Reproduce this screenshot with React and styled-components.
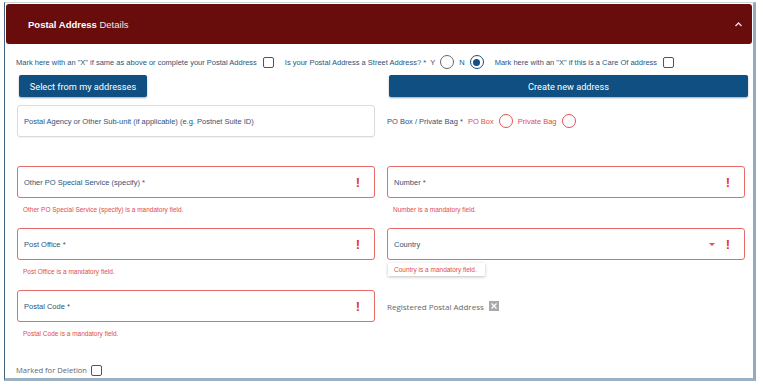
import React from "react";
import styled, { createGlobalStyle } from "styled-components";

const Global = createGlobalStyle`
  html, body { margin: 0; padding: 0; background: #fff; }
  body { font-family: "Liberation Sans", Arial, sans-serif; }
`;

const Frame = styled.div`
  margin: 2px 0 0 4px;
  width: 748px;
  height: 375px;
  border-top: 1px solid #c9d6df;
  border-left: 1px solid #3f6482;
  border-right: 3px solid #93aabb;
  border-bottom: 3px solid #9db2c2;
  box-sizing: content-box;
  display: flex;
  flex-direction: column;
`;

const Header = styled.div`
  margin: 1px 1px 0 1px;
  height: 40px;
  background: #680c0c;
  border-radius: 3px;
  display: flex;
  align-items: center;
  justify-content: space-between;
  padding: 0 9px 0 22px;
  color: #fff;
  font-size: 9.5px;
`;

const Title = styled.div`
  b { font-weight: 700; }
  span { font-weight: 400; color: #f3e6e6; }
`;

const Body = styled.div`
  padding: 0 7px 0 12px;
  display: flex;
  flex-direction: column;
`;

const CheckLine = styled.div`
  display: flex;
  align-items: center;
  height: 16px;
  margin-top: 10px;
  margin-left: -1px;
  font-size: 7.5px;
  color: #2d5479;
  white-space: nowrap;
`;

const Inline = styled.span`
  display: inline-flex;
  align-items: center;
  gap: ${(p) => p.$gap || 4}px;
  margin-right: ${(p) => p.$mr || 0}px;
`;

const Box = styled.span`
  display: inline-block;
  width: 9px;
  height: 9px;
  border: 1px solid #555;
  border-radius: 2px;
  margin-left: ${(p) => p.$ml || 0}px;
  flex: none;
`;

const GreyX = styled.span`
  display: inline-flex;
  align-items: center;
  justify-content: center;
  width: 10px;
  height: 10px;
  background: #a9a9a9;
  margin-left: 5px;
  flex: none;
`;

const Radio = styled.span`
  display: inline-flex;
  align-items: center;
  justify-content: center;
  box-sizing: border-box;
  width: 14px;
  height: 14px;
  border-radius: 50%;
  border: 1.3px solid ${(p) => p.$color};
  flex: none;
  &::after {
    content: "";
    display: ${(p) => (p.$checked ? "block" : "none")};
    width: 7px;
    height: 7px;
    border-radius: 50%;
    background: ${(p) => p.$color};
  }
`;

const Grid = styled.div`
  display: grid;
  grid-template-columns: 358px 358px;
  column-gap: 12px;
`;

const Button = styled.div`
  height: 22px;
  background: #0f4f81;
  color: #fff;
  border-radius: 2px;
  box-shadow: 0 1px 2px rgba(0,0,0,0.35);
  font-family: Roboto, "Liberation Sans", sans-serif;
  font-size: 9.2px;
  display: flex;
  align-items: center;
  justify-content: center;
  margin: 0 ${(p) => p.$mr || 0}px 0 2px;
  width: ${(p) => (p.$w ? p.$w + "px" : "auto")};
`;

const ButtonRow = styled(Grid)`
  margin-top: 5px;
`;

const Field = styled.div`
  height: ${(p) => p.$h || 62}px;
  display: flex;
  flex-direction: column;
`;

const Input = styled.div`
  height: 32px;
  flex: none;
  box-sizing: border-box;
  border: 1px solid ${(p) => (p.$error ? "#e86b6b" : "#d9dde0")};
  border-radius: 3px;
  display: flex;
  align-items: center;
  padding: 0 14px 0 6px;
  font-size: 7.5px;
  color: #2d5479;
  box-shadow: ${(p) => (p.$error ? "none" : "0 1px 1px rgba(0,0,0,0.06)")};
`;

const Label = styled.span`
  flex: 1;
`;

const Bang = styled.span`
  color: #e03535;
  font-weight: 700;
  font-size: 13px;
  line-height: 1;
`;

const Caret = styled.span`
  width: 0;
  height: 0;
  border-left: 3px solid transparent;
  border-right: 3px solid transparent;
  border-top: 3.5px solid #e05050;
  margin-right: 11px;
`;

const Error = styled.div`
  font-size: 6.5px;
  color: #e24b4b;
  margin-top: 8px;
  padding-left: 6px;
  ${(p) =>
    p.$boxed &&
    `align-self: flex-start; padding: 3px 8px 3px 6px; margin-top: 3px; margin-left: 1px; box-shadow: 0 1px 3px rgba(0,0,0,0.25); background:#fff;`}
`;

const Side = styled.div`
  display: flex;
  align-items: center;
  height: ${(p) => p.$h || 32}px;
  font-size: 7.5px;
  color: #2d5479;
  white-space: nowrap;
`;

const Red = styled.span`
  color: #e24b4b;
  display: inline-flex;
  align-items: center;
  gap: 5px;
  margin-left: 5px;
`;

const Grey = styled.span`
  font-family: "Open Sans", "Liberation Sans", sans-serif;
  font-size: ${(p) => p.$fs || 8}px;
  color: #666;
  display: inline-flex;
  align-items: center;
`;

const Footer = styled(Side)`
  margin-top: 11px;
  margin-left: -1px;
`;

const Chevron = () => (
  <svg width="9" height="6" viewBox="0 0 9 6">
    <path d="M1.5 5 L4.5 2 L7.5 5" fill="none" stroke="#f4dada" strokeWidth="1.4" />
  </svg>
);

export default function App() {
  return (
    <>
      <Global />
      <Frame>
        <Header>
          <Title>
            <b>Postal Address</b> <span>Details</span>
          </Title>
          <Chevron />
        </Header>
        <Body>
          <CheckLine>
            <Inline $mr={11}>
              Mark here with an "X" if same as above or complete your Postal Address
              <Box $ml={2} />
            </Inline>
            <Inline $gap={5} $mr={11}>
              Is your Postal Address a Street Address? *&nbsp; Y
              <Radio $color="#666" /> N <Radio $color="#144f80" $checked />
            </Inline>
            <Inline>
              Mark here with an "X" if this is a Care Of address
              <Box $ml={2} />
            </Inline>
          </CheckLine>
          <ButtonRow>
            <Button $w={128}>Select from my addresses</Button>
            <Button $mr={-3}>Create new address</Button>
          </ButtonRow>
          <Grid style={{ marginTop: 8 }}>
            <Field $h={61}>
              <Input>
                <Label>Postal Agency or Other Sub-unit (if applicable) (e.g. Postnet Suite ID)</Label>
              </Input>
            </Field>
            <Side>
              PO Box / Private Bag *
              <Red>
                PO Box <Radio $color="#e55353" />
              </Red>
              <Red>
                Private Bag <Radio $color="#e55353" />
              </Red>
            </Side>

            <Field>
              <Input $error>
                <Label>Other PO Special Service (specify) *</Label>
                <Bang>!</Bang>
              </Input>
              <Error>Other PO Special Service (specify) is a mandatory field.</Error>
            </Field>
            <Field>
              <Input $error>
                <Label>Number *</Label>
                <Bang>!</Bang>
              </Input>
              <Error>Number is a mandatory field.</Error>
            </Field>

            <Field>
              <Input $error>
                <Label>Post Office *</Label>
                <Bang>!</Bang>
              </Input>
              <Error>Post Office is a mandatory field.</Error>
            </Field>
            <Field>
              <Input $error>
                <Label>Country</Label>
                <Caret />
                <Bang>!</Bang>
              </Input>
              <Error $boxed>Country is a mandatory field.</Error>
            </Field>

            <Field>
              <Input $error>
                <Label>Postal Code *</Label>
                <Bang>!</Bang>
              </Input>
              <Error>Postal Code is a mandatory field.</Error>
            </Field>
            <Side>
              <Grey>
                Registered Postal Address
                <GreyX>
                  <svg width="6" height="6" viewBox="0 0 6 6">
                    <path d="M0.5 0.5 L5.5 5.5 M5.5 0.5 L0.5 5.5" stroke="#fff" strokeWidth="1.2" />
                  </svg>
                </GreyX>
              </Grey>
            </Side>
          </Grid>
          <Footer $h={14}>
            <Grey $fs={7.6}>
              Marked for Deletion
              <Box $ml={4} />
            </Grey>
          </Footer>
        </Body>
      </Frame>
    </>
  );
}
